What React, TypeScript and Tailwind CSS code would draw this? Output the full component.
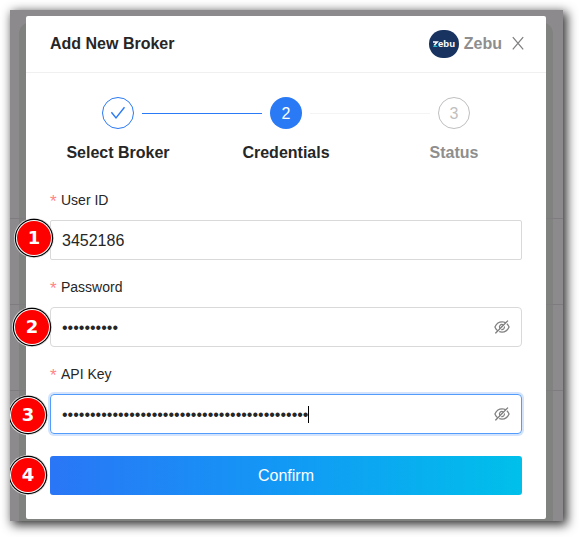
import React from "react";
import { AiOutlineEyeInvisible } from "react-icons/ai";

function Label({ children }: { children: React.ReactNode }) {
  return (
    <div className="flex h-[22px] items-center text-[14px] leading-[22px]">
      <span className="mr-[4px] w-[7px] pt-[3px] text-[17px] text-[#ff8586]">*</span>
      {children}
    </div>
  );
}

function StepTitle({ children, muted }: { children: React.ReactNode; muted?: boolean }) {
  return (
    <div className={`w-[168px] text-center text-base leading-6 font-bold ${muted ? "text-[#8e8e8e]" : "text-[#262626]"}`}>
      {children}
    </div>
  );
}

function Marker({ n, className }: { n: number; className: string }) {
  return (
    <div className={`absolute flex size-[40px] items-center justify-center ${className}`}>
      <div className="flex size-[34px] items-center justify-center rounded-full bg-[#fd0000] pb-px font-['DejaVu_Sans',sans-serif] text-[18px] leading-none font-bold text-white shadow-[0_0_0_1px_#fff,0_0_0_2.2px_#000,0_0_0_3px_#ddd]">
        {n}
      </div>
    </div>
  );
}

export default function App() {
  return (
    <div className="h-[537px] w-[579px] overflow-hidden bg-white p-[10px] font-['Liberation_Sans',Arial,sans-serif] text-[#262626]">
      <div className="relative h-[511px] w-[553px] bg-[#8c8a8c] pt-[6px] pl-4 shadow-[3px_3px_10px_1px_rgba(0,0,0,0.8)]">
        <div className="absolute top-[12px] bottom-0 left-[9px] w-[534px] rounded-t-[12px] bg-[#80827f]" />
        <div className="absolute inset-x-0 top-[208px] h-px bg-[#7e7c7e]" />
        <div className="absolute inset-x-0 top-[294px] h-px bg-[#7e7c7e]" />
        <div className="absolute inset-x-0 top-[380px] h-px bg-[#7e7c7e]" />
        <div className="relative h-[503px] w-[520px] rounded-[2px] bg-white">
          <header className="flex h-[57px] items-center border-b border-[#f0f0f0] px-6 text-base font-bold">
            <h1 className="flex-1 leading-6">Add New Broker</h1>
            <div className="mr-[5px] flex h-[28px] w-[30px] items-center justify-center rounded-full bg-[#183360]">
              <svg width="24" height="12" viewBox="0 0 24 12" aria-label="zebu">
                <path d="M1 4H5.2L2 7.4" fill="none" stroke="white" strokeWidth="1.5" />
                <path d="M0.8 9L3 6.8L6 9Z" fill="#28b7c8" />
                <text x="6" y="9" textLength="17" lengthAdjust="spacingAndGlyphs" fontSize="9.5" fontWeight="bold" fill="white">ebu</text>
              </svg>
            </div>
            <span className="text-[#8e8e8e]">Zebu</span>
            <svg className="-mr-1 ml-2 size-4" viewBox="0 0 16 16" fill="none" stroke="#808080" strokeWidth="1.3">
              <path d="M2.8 1.2L13.2 13.4M13.2 1.2L2.8 13.4" />
            </svg>
          </header>
          <div className="mt-6 flex h-8 items-center px-[76px]">
            <div className="flex size-8 items-center justify-center rounded-full border border-[#2b7af5]">
              <svg className="size-4" viewBox="0 0 16 16" fill="none" stroke="#2b7af5" strokeWidth="1.4">
                <path d="M1.4 7.2L6 12.9L14.5 2.2" />
              </svg>
            </div>
            <div className="mx-2 mt-px h-px flex-1 bg-[#2b7af5]" />
            <div className="flex size-8 items-center justify-center rounded-full bg-[#2b7af5] pt-[2px] text-base text-white">2</div>
            <div className="mx-2 mt-px h-px flex-1 bg-[#f4f4f4]" />
            <div className="flex size-8 items-center justify-center rounded-full border border-[#bfbfbf] pt-[2px] text-base text-[#bfbfbf]">3</div>
          </div>
          <div className="mt-3 flex px-2">
            <StepTitle>Select Broker</StepTitle>
            <StepTitle>Credentials</StepTitle>
            <StepTitle muted>Status</StepTitle>
          </div>
          <form className="mt-6 px-6">
            <Label>User ID</Label>
            <div className="mt-[9px] flex h-10 items-center rounded-[2px] border border-[#d9d9d9] px-[11px] pt-[2px] text-base">3452186</div>
            <div className="mt-4"><Label>Password</Label></div>
            <div className="mt-[9px] flex h-10 items-center rounded-[4px] border border-[#d9d9d9] px-[11px] text-base">
              <span className="flex-1 pt-[2px]">{"•".repeat(10)}</span>
              <AiOutlineEyeInvisible className="-mr-px size-[18px] text-[#808080]" />
            </div>
            <div className="mt-4"><Label>API Key</Label></div>
            <div className="mt-[9px] flex h-10 items-center rounded-[4px] border border-[#529dfb] px-[11px] text-base shadow-[0_0_0_2px_#d4e4fd]">
              <span className="pt-[2px]">{"•".repeat(44)}</span>
              <span className="h-[17px] w-px bg-black" />
              <AiOutlineEyeInvisible className="-mr-px ml-auto size-[18px] text-[#808080]" />
            </div>
            <button type="button" className="mt-[22px] flex h-[39px] w-full items-center justify-center rounded-[3px] bg-linear-to-r/srgb from-[#2a76f6] via-[#1299f5] to-[#00c0ea] text-base text-white">
              Confirm
            </button>
          </form>
        </div>
        <div className="absolute inset-0">
          <Marker n={1} className="top-[208px] left-[4px]" />
          <Marker n={2} className="top-[297px] left-[2px]" />
          <div className="absolute inset-0 overflow-hidden">
            <Marker n={3} className="top-[385px] -left-[2px]" />
            <Marker n={4} className="top-[445px] -left-[2px]" />
          </div>
        </div>
      </div>
    </div>
  );
}
